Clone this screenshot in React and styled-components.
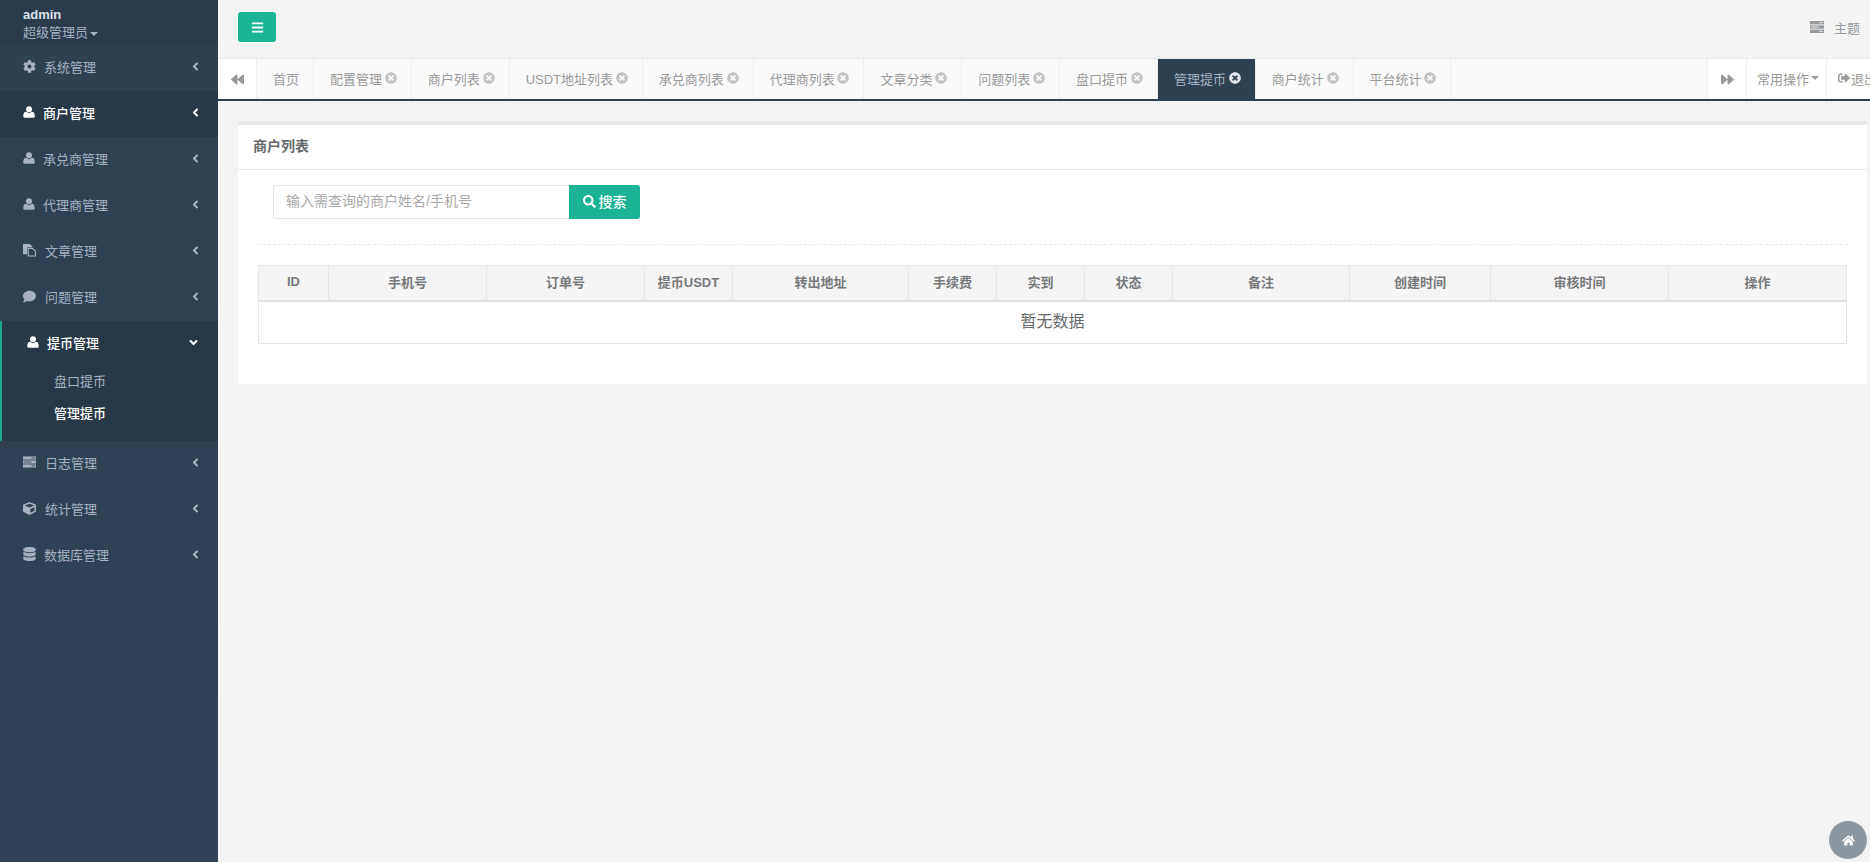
import React from "react";
import styled, { createGlobalStyle } from "styled-components";
import {
  FaAngleDown,
  FaAngleLeft,
  FaBackward,
  FaBars,
  FaCog,
  FaComment,
  FaCube,
  FaDatabase,
  FaForward,
  FaHome,
  FaSearch,
  FaSignOutAlt,
  FaTimesCircle,
} from "react-icons/fa";

// Icons that are not in the package in this shape

function TasksIcon({ size = 14, slit = "#2f4050" }) {
  return (
    <svg width={size} height={size} viewBox="0 0 14 14" fill="currentColor">
      <rect x="0" y="1" width="14" height="3.4" />
      <rect x="0" y="5.3" width="14" height="3.4" />
      <rect x="0" y="9.6" width="14" height="3.4" />
      <rect x="9" y="2.3" width="4" height="0.8" fill={slit} />
      <rect x="1" y="6.6" width="8" height="0.8" fill={slit} />
      <rect x="9" y="10.9" width="4" height="0.8" fill={slit} />
    </svg>
  );
}

function FilesIcon({ size = 14 }) {
  return (
    <svg width={size} height={size} viewBox="0 0 14 14" fill="currentColor">
      <path d="M0 0.5h7.5l2.5 2.5v1H4.5v7.5H0z" />
      <path
        d="M5.6 5.2h4.4l3.4 3v5.3H5.6z"
        fill="none"
        stroke="currentColor"
        strokeWidth="1.2"
      />
    </svg>
  );
}

function UserIcon({ size = 12 }) {
  return (
    <svg width={size} height={size} viewBox="0 0 14 14" fill="currentColor">
      <circle cx="7" cy="3.8" r="3.5" />
      <path d="M1.6 13.6c-.8 0-1.3-.5-1.3-1.4 0-3.1 1-5.4 3.3-5.4.9.8 2 1.3 3.4 1.3s2.5-.5 3.4-1.3c2.3 0 3.3 2.3 3.3 5.4 0 .9-.5 1.4-1.3 1.4z" />
    </svg>
  );
}

const menu = [
  { label: "系统管理", icon: <FaCog size={13} />, gap: 8 },
  { label: "商户管理", icon: <UserIcon />, gap: 7, current: true },
  { label: "承兑商管理", icon: <UserIcon />, gap: 7 },
  { label: "代理商管理", icon: <UserIcon />, gap: 7 },
  { label: "文章管理", icon: <FilesIcon />, gap: 9 },
  { label: "问题管理", icon: <FaComment size={13} />, gap: 9 },
  {
    label: "提币管理",
    icon: <UserIcon />,
    gap: 7,
    open: true,
    children: [{ label: "盘口提币" }, { label: "管理提币", current: true }],
  },
  { label: "日志管理", icon: <TasksIcon />, gap: 9 },
  { label: "统计管理", icon: <FaCube size={13} />, gap: 9 },
  { label: "数据库管理", icon: <FaDatabase size={14} />, gap: 8 },
];

const tabs = [
  { label: "首页", fixed: true },
  { label: "配置管理" },
  { label: "商户列表" },
  { label: "USDT地址列表" },
  { label: "承兑商列表" },
  { label: "代理商列表" },
  { label: "文章分类" },
  { label: "问题列表" },
  { label: "盘口提币" },
  { label: "管理提币", active: true },
  { label: "商户统计" },
  { label: "平台统计" },
];

const columns = [
  { label: "ID", width: 70 },
  { label: "手机号", width: 158 },
  { label: "订单号", width: 158 },
  { label: "提币USDT", width: 88 },
  { label: "转出地址", width: 176 },
  { label: "手续费", width: 88 },
  { label: "实到", width: 88 },
  { label: "状态", width: 88 },
  { label: "备注", width: 177 },
  { label: "创建时间", width: 141 },
  { label: "审核时间", width: 178 },
  { label: "操作", width: 178 },
];

function MenuItem({ item }) {
  return (
    <NavItem $current={item.current} $open={item.open}>
      <NavLink $current={item.current} $open={item.open}>
        <NavIcon>{item.icon}</NavIcon>
        <NavLabel style={{ marginLeft: item.gap }}>{item.label}</NavLabel>
        <NavArrow>
          {item.open ? <FaAngleDown size={13} /> : <FaAngleLeft size={13} />}
        </NavArrow>
      </NavLink>
      {item.children && (
        <SubMenu>
          {item.children.map((child) => (
            <SubLink key={child.label} $current={child.current}>
              {child.label}
            </SubLink>
          ))}
        </SubMenu>
      )}
    </NavItem>
  );
}

export default function App() {
  return (
    <Page>
      <GlobalStyle />
      <Sidebar>
        <Profile>
          <ProfileName>admin</ProfileName>
          <ProfileRole>
            超级管理员
            <Caret />
          </ProfileRole>
        </Profile>
        <nav>
          {menu.map((item) => (
            <MenuItem key={item.label} item={item} />
          ))}
        </nav>
      </Sidebar>

      <Main>
        <TopBar>
          <MenuButton>
            <FaBars size={13} />
          </MenuButton>
          <ThemeLink>
            <TasksIcon slit="#f3f4f3" />
            主题
          </ThemeLink>
        </TopBar>

        <TabBar>
          <TabArrow>
            <FaBackward size={13} />
          </TabArrow>
          <TabList>
            {tabs.map((tab) => (
              <Tab key={tab.label} $active={tab.active}>
                {tab.label}
                {!tab.fixed && (
                  <TabClose $active={tab.active}>
                    <FaTimesCircle size={12} />
                  </TabClose>
                )}
              </Tab>
            ))}
          </TabList>
          <TabArrow>
            <FaForward size={13} />
          </TabArrow>
          <TabAction>
            常用操作
            <Caret />
          </TabAction>
          <ExitAction>
            <FaSignOutAlt size={12} />
            退出
          </ExitAction>
        </TabBar>

        <Content>
          <Card>
            <CardTitle>商户列表</CardTitle>
            <SearchRow>
              <SearchInput placeholder="输入需查询的商户姓名/手机号" />
              <SearchButton>
                <FaSearch size={13} />
                搜索
              </SearchButton>
            </SearchRow>
            <Divider />
            <Table>
              <colgroup>
                {columns.map((col) => (
                  <col key={col.label} width={col.width} />
                ))}
              </colgroup>
              <thead>
                <tr>
                  {columns.map((col) => (
                    <HeadCell key={col.label}>{col.label}</HeadCell>
                  ))}
                </tr>
              </thead>
              <tbody>
                <tr>
                  <EmptyCell colSpan={columns.length}>暂无数据</EmptyCell>
                </tr>
              </tbody>
            </Table>
          </Card>
        </Content>
      </Main>

      <HomeButton>
        <FaHome size={13} />
      </HomeButton>
    </Page>
  );
}

// Style

const GlobalStyle = createGlobalStyle`
  html, body {
    margin: 0;
    height: 100%;
    overflow: hidden;
  }

  body {
    background-color: #f3f3f4;
    color: #676a6c;
    font-family: "Liberation Sans", "Noto Sans CJK SC", sans-serif;
    font-size: 13px;
  }

  * {
    box-sizing: border-box;
  }
`;

const Page = styled.div`
  position: relative;
  display: flex;
  width: 100vw;
  height: 100vh;
  overflow: hidden;
`;

const Sidebar = styled.aside`
  flex: 0 0 218px;
  background: linear-gradient(180deg, #2f4050 0%, #2f4257 100%);
  color: #a7b1c2;
`;

const Profile = styled.div`
  height: 45px;
  padding: 7px 0 0 23px;
  background-color: #2b3b4c;
`;

const ProfileName = styled.div`
  color: #dfe4ed;
  font-weight: bold;
  line-height: 15px;
`;

const ProfileRole = styled.div`
  margin-top: 2px;
  line-height: 17px;
`;

const Caret = styled.span`
  display: inline-block;
  margin-left: 2px;
  vertical-align: middle;
  border-top: 4px solid currentColor;
  border-left: 4px solid transparent;
  border-right: 4px solid transparent;
`;

const NavItem = styled.div`
  background-color: ${(p) =>
    p.$current || p.$open ? "#293846" : "transparent"};
  border-left: ${(p) => (p.$open ? "2px solid #19aa8d" : "0")};
  padding-bottom: ${(p) => (p.$open ? "10px" : "0")};
`;

const NavLink = styled.a`
  display: flex;
  align-items: center;
  height: 46px;
  padding: 0 ${(p) => (p.$open ? "18px" : "16px")} 4px
    ${(p) => (p.$open ? "25px" : "23px")};
  color: ${(p) => (p.$current || p.$open ? "#fff" : "#a7b1c2")};
  font-weight: ${(p) => (p.$current || p.$open ? "500" : "normal")};
`;

const NavIcon = styled.span`
  display: inline-flex;
  align-items: center;
  justify-content: flex-start;
  width: 13px;
  flex: none;
`;

const NavLabel = styled.span`
  flex: 1;
`;

const NavArrow = styled.span`
  display: inline-flex;
  align-items: center;
`;

const SubMenu = styled.div`
  display: flex;
  flex-direction: column;
`;

const SubLink = styled.a`
  display: block;
  height: 32px;
  padding-left: 52px;
  line-height: 29px;
  color: ${(p) => (p.$current ? "#fff" : "#a7b1c2")};
  font-weight: ${(p) => (p.$current ? "500" : "normal")};
`;

const Main = styled.main`
  flex: 1;
  min-width: 0;
  display: flex;
  flex-direction: column;
`;

const TopBar = styled.header`
  flex: 0 0 59px;
  display: flex;
  align-items: flex-start;
  justify-content: space-between;
  padding: 12px 10px 0 20px;
  background-color: #f3f4f3;
  border-bottom: 1px solid #e7eaec;
`;

const MenuButton = styled.button`
  display: flex;
  align-items: center;
  justify-content: center;
  width: 38px;
  height: 30px;
  padding: 0;
  border: 0;
  border-radius: 3px;
  background-color: #1ab394;
  color: #fff;
`;

const ThemeLink = styled.a`
  display: flex;
  align-items: center;
  gap: 10px;
  height: 30px;
  color: #999c9e;
`;

const TabBar = styled.div`
  flex: 0 0 42px;
  display: flex;
  background-color: #fafafa;
  border-bottom: 2px solid #2f4050;
  color: #999;
`;

const TabArrow = styled.button`
  flex: 0 0 40px;
  display: flex;
  align-items: center;
  justify-content: center;
  padding: 0;
  border: 0;
  border-right: 1px solid #eee;
  border-left: 1px solid #eee;
  background-color: #fff;
  color: #999;

  &:first-child {
    flex-basis: 39px;
    border-left: 0;
  }
`;

const TabList = styled.div`
  flex: 1;
  min-width: 0;
  display: flex;
`;

const Tab = styled.a`
  display: flex;
  align-items: center;
  flex: none;
  padding: 0 14px 2px 16px;
  border-right: 1px solid #eee;
  background-color: ${(p) => (p.$active ? "#2f4050" : "transparent")};
  color: ${(p) => (p.$active ? "#a7b1c2" : "#999")};
`;

const TabClose = styled.span`
  display: inline-flex;
  margin-left: 2.8px;
  color: ${(p) => (p.$active ? "#e4e8ee" : "#c4c4c4")};
`;

const TabAction = styled.a`
  flex: 0 0 80px;
  display: flex;
  align-items: center;
  padding: 0 0 2px 10px;
  border-right: 1px solid #eee;
  background-color: #fff;
  white-space: nowrap;
`;

const ExitAction = styled.a`
  flex: 0 0 43px;
  display: flex;
  align-items: center;
  gap: 1px;
  padding: 0 0 2px 11px;
  overflow: hidden;
  background-color: #fff;
  white-space: nowrap;

  svg {
    flex: none;
  }
`;

const Content = styled.div`
  flex: 1;
  padding: 20px 3px 0 20px;
`;

const Card = styled.section`
  height: 263px;
  padding-bottom: 41px;
  background-color: #fff;
  border-top: 4px solid #e7eaec;
`;

const CardTitle = styled.h5`
  height: 45px;
  margin: 0;
  padding-left: 15px;
  border-bottom: 1px solid #e7eaec;
  color: #676a6c;
  font-size: 14px;
  font-weight: bold;
  line-height: 42px;
`;

const SearchRow = styled.div`
  display: flex;
  margin: 15px 0 0 35px;
`;

const SearchInput = styled.input`
  width: 296px;
  height: 34px;
  padding: 0 12px 2px;
  border: 1px solid #e5e6e7;
  border-right: 0;
  border-radius: 1px 0 0 1px;
  outline: none;
  color: #676a6c;
  font: inherit;
  font-size: 14px;

  &::placeholder {
    color: #a9a9a9;
    opacity: 1;
  }
`;

const SearchButton = styled.button`
  display: flex;
  align-items: center;
  justify-content: center;
  gap: 3px;
  width: 71px;
  height: 34px;
  padding: 0 0 2px;
  border: 0;
  border-radius: 0 3px 3px 0;
  background-color: #1ab394;
  color: #fff;
  font: inherit;
  font-size: 14px;
  font-weight: 500;
`;

const Divider = styled.div`
  height: 1px;
  margin: 25px 19px 20px 20px;
  border-top: 1px dashed #e7eaec;
`;

const Table = styled.table`
  width: 1589px;
  margin-left: 20px;
  table-layout: fixed;
  border-collapse: collapse;
`;

const HeadCell = styled.th`
  height: 35px;
  padding: 0 0 3px;
  border: 1px solid #e7e7e7;
  border-bottom: 2px solid #e0e0e0;
  background-color: #f5f5f6;
  color: #77797b;
  font-size: 13px;
  font-weight: bold;
  text-align: center;
`;

const EmptyCell = styled.td`
  height: 43px;
  padding: 0 0 4px;
  border: 1px solid #e7e7e7;
  color: #676a6c;
  font-size: 16px;
  text-align: center;
`;

const HomeButton = styled.button`
  position: absolute;
  right: 3px;
  bottom: 3px;
  display: flex;
  align-items: center;
  justify-content: center;
  width: 38px;
  height: 38px;
  padding: 0;
  border: 0;
  border-radius: 50%;
  background-color: #8b969e;
  color: #fff;
`;
